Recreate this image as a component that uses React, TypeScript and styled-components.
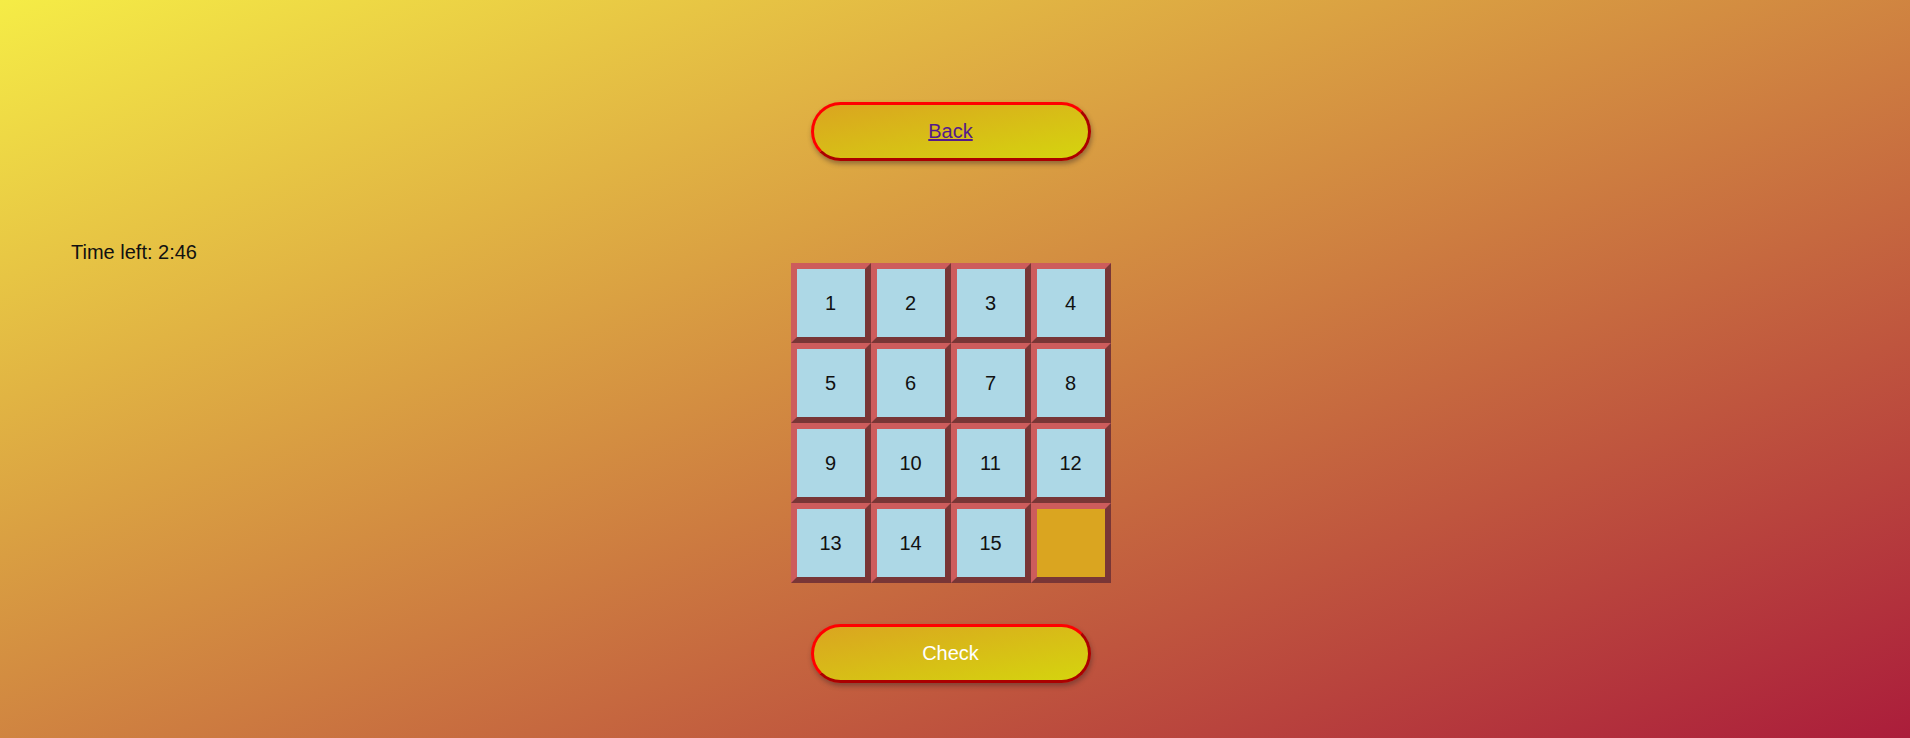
import React, { useState } from "react";
import styled, { createGlobalStyle } from "styled-components";

const GlobalStyle = createGlobalStyle`
  html, body {
    margin: 0;
    min-height: 100vh;
  }
  body {
    background: linear-gradient(to bottom right, #f5ec46, #ab1d3b);
    background-attachment: fixed;
    font-family: "Liberation Sans", Arial, sans-serif;
    overflow: hidden;
  }
`;

const Page = styled.div`
  min-height: 100vh;
  box-sizing: border-box;
  padding: 102px 9px 0 0;
  display: flex;
  flex-direction: column;
  align-items: center;
`;

const PillButton = styled.button`
  width: 280px;
  height: 59px;
  box-sizing: border-box;
  border: 3px outset red;
  border-radius: 30px;
  background: linear-gradient(to bottom right, goldenrod, #d5d40e);
  box-shadow: 1px 3px 5px rgba(60, 40, 40, 0.45);
  font-family: "Liberation Sans", Arial, sans-serif;
  font-size: 20px;
  color: white;
  cursor: pointer;
`;

const BackLink = styled.a`
  color: #551a8b;
  text-decoration: underline;
`;

const Timer = styled.div`
  align-self: stretch;
  margin-top: 80px;
  padding-left: 71px;
  font-size: 20px;
  line-height: 22px;
  color: #111;
`;

const Board = styled.div`
  display: grid;
  grid-template-columns: repeat(4, 80px);
  grid-template-rows: repeat(4, 80px);
  margin-bottom: 41px;
`;

const Tile = styled.div<{ $empty?: boolean }>`
  box-sizing: border-box;
  border: 6px outset indianred;
  background: ${(p) => (p.$empty ? "goldenrod" : "lightblue")};
  display: flex;
  align-items: center;
  justify-content: center;
  font-size: 20px;
  color: #111;
  cursor: pointer;
`;

const tiles = [1, 2, 3, 4, 5, 6, 7, 8, 9, 10, 11, 12, 13, 14, 15, 0];

const App: React.FC = () => {
  const [seconds] = useState<number>(166);
  const [board] = useState<number[]>(tiles);

  const mm = Math.floor(seconds / 60);
  const ss = String(seconds % 60).padStart(2, "0");

  return (
    <>
      <GlobalStyle />
      <Page>
        <PillButton>
          <BackLink href="#">Back</BackLink>
        </PillButton>
        <Timer>
          Time left: {mm}:{ss}
        </Timer>
        <Board>
          {board.map((n) => (
            <Tile key={n} $empty={n === 0}>
              {n === 0 ? "" : n}
            </Tile>
          ))}
        </Board>
        <PillButton>Check</PillButton>
      </Page>
    </>
  );
};

export default App;
